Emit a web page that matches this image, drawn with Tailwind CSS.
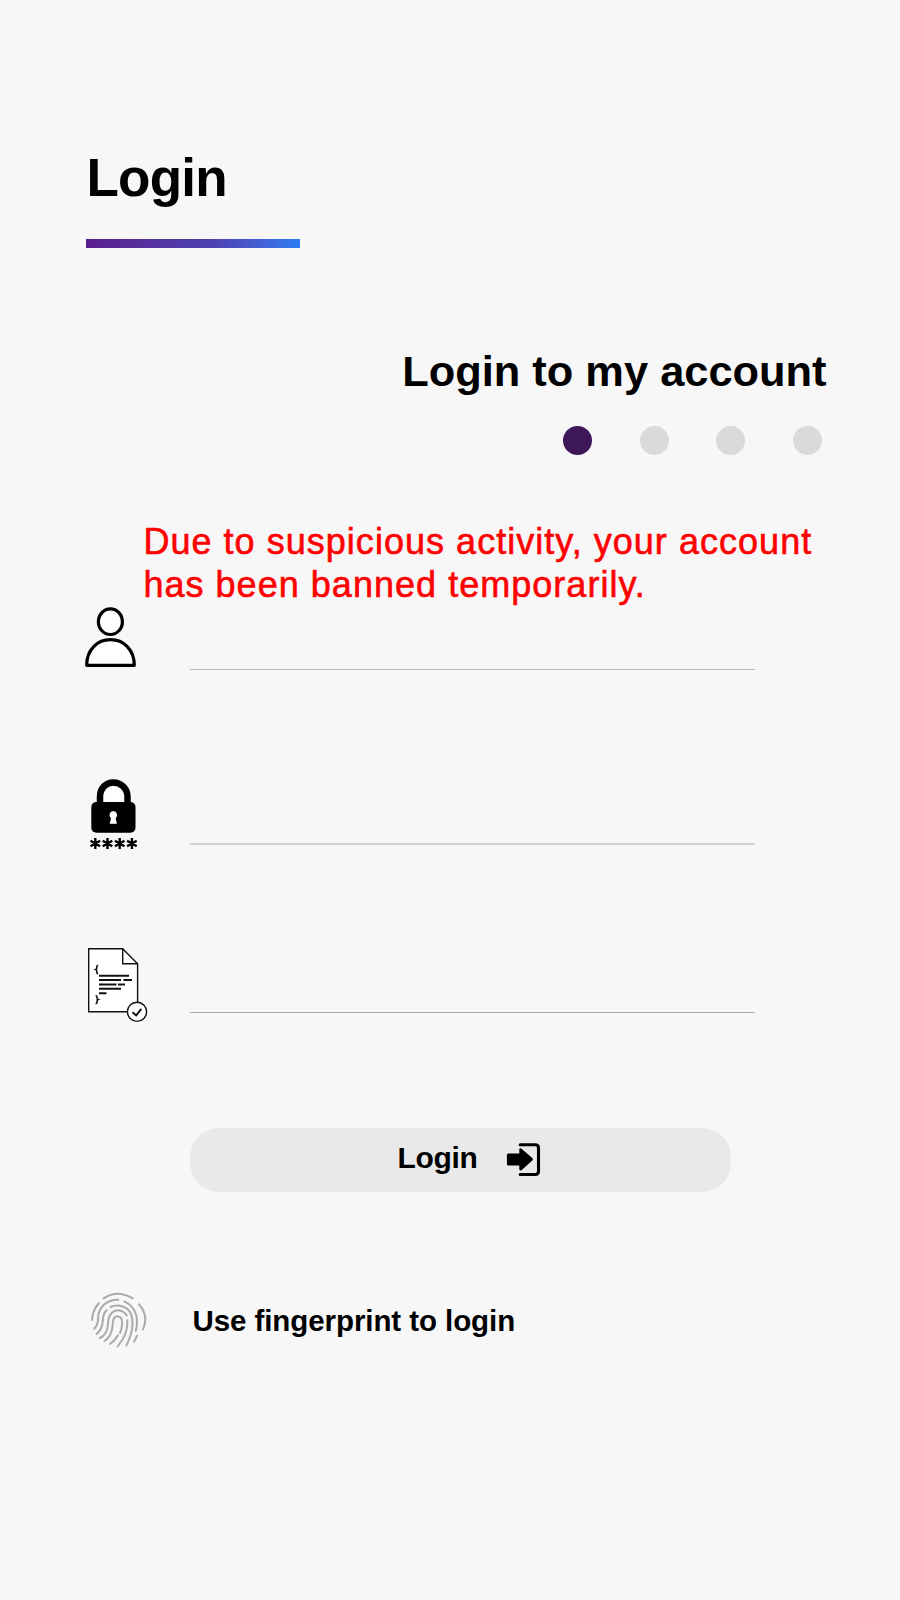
<!DOCTYPE html>
<html lang="en">
<head>
<meta charset="utf-8">
<title>Login</title>
<script src="https://cdn.jsdelivr.net/npm/@tailwindcss/browser@4"></script>
</head>
<body class="bg-[#f7f7f7]">
<main class="flex h-[1600px] w-[900px] flex-col overflow-hidden bg-[#f7f7f7] pt-[148px] font-['Liberation_Sans',Arial,sans-serif] text-black">
  <header class="pl-[85.5px]">
    <h1 class="ml-[1px] text-[53px] leading-[60px] font-bold tracking-[-0.8px]">Login</h1>
    <div class="mt-[31px] h-[9px] w-[214.5px] bg-linear-to-r from-[#5b1e8e] via-[#4c42b2] via-60% to-[#2b7bf3]"></div>
  </header>
  <section class="mt-[98px] flex flex-col items-end">
    <h2 class="mr-[73.5px] text-[43.4px] leading-[50px] font-bold whitespace-nowrap">Login to my account</h2>
    <div class="mt-[30px] mr-[78.5px] flex gap-[47.5px]">
      <span class="size-[29px] rounded-full bg-[#3d1758]"></span>
      <span class="size-[29px] rounded-full bg-[#dadada]"></span>
      <span class="size-[29px] rounded-full bg-[#dadada]"></span>
      <span class="size-[29px] rounded-full bg-[#dadada]"></span>
    </div>
  </section>
  <p class="mt-[65px] ml-[143.4px] h-[86px] text-[36px] leading-[43px] tracking-[1.03px] whitespace-nowrap text-[#ff0000] [-webkit-text-stroke:0.6px_#ff0000]">Due to suspicious activity, your account<br>has been banned temporarily.</p>
  <form class="flex flex-col">
    <label class="flex h-[64px] items-end">
      <svg class="ml-20 h-[70px] w-20 shrink-0" viewBox="80 600 80 70" fill="#fff" stroke="#000" stroke-width="3.2" stroke-linejoin="round"><ellipse cx="110.4" cy="621.7" rx="12" ry="12.8"/><path d="M86.7 665.3C86.7 649.5 97.5 639.7 110.5 639.7S134.3 649.5 134.3 665.3Z"/></svg>
      <span class="ml-[30px] h-px w-[565px] bg-[#b8b8b8]"></span>
    </label>
    <label class="flex h-[175px] items-end">
      <svg class="ml-20 h-[80px] w-20 shrink-0 translate-y-[9px]" viewBox="80 774 80 80" fill="none">
        <path d="M100 806V798C100 789 106 784 113.300 784S127 789 127 798V806Z" fill="#fff"/>
        <path d="M100 806V797C100 788 106 782.500 113.300 782.500S127.500 788 127.500 797V806" stroke="#000" stroke-width="6.500"/>
        <rect x="91.300" y="802" width="44.200" height="30.700" rx="5" fill="#000"/>
        <path d="M113.300 811A3.900 3.900 0 0 1 115.900 817.700L115.800 819.500L117 823.700H109.600L110.800 819.500L110.700 817.700A3.900 3.900 0 0 1 113.300 811Z" fill="#fff"/>
        <path stroke="#000" stroke-width="2.400" d="M95.300 838V849M90.500 840.700L100.100 846.300M90.500 846.300L100.100 840.700M107.500 838V849M102.700 840.700L112.300 846.300M102.700 846.300L112.300 840.700M119.700 838V849M114.900 840.700L124.500 846.300M114.900 846.300L124.500 840.700M131.900 838V849M127.100 840.700L136.700 846.300M127.100 846.300L136.700 840.700"/>
      </svg>
      <span class="ml-[30px] h-[2px] w-[565px] bg-[#d2d2d2]"></span>
    </label>
    <label class="flex h-[168px] items-end">
      <svg class="ml-20 h-[90px] w-20 shrink-0 translate-y-[17px]" viewBox="80 940 80 90" fill="none" stroke="#111" stroke-width="1.400">
        <path d="M88.700 948.700H122.700L137.600 963.700V1011.800H88.700Z" fill="#fff"/><path d="M122.700 948.700V963.700H137.600"/>
        <path stroke-width="1.600" d="M98.200 965.300Q96.700 965.300 96.700 967V968.300Q96.700 969.300 95.700 969.600Q96.700 970 96.700 971V972Q96.700 973.700 98.200 973.700M95.600 995.500Q97.100 995.500 97.100 997.200V998.400Q97.100 999.300 98.100 999.600Q97.100 1000 97.100 1000.900V1002Q97.100 1003.600 95.600 1003.600"/>
        <path stroke-width="1.900" d="M99 975.700H129M99 980H121M123.500 980H132M99 984.500H116.500M118 984.500H125M99 988.700H121M99 993.200H106.500"/>
        <circle cx="137" cy="1011.800" r="9.600" fill="#fff"/><path stroke-width="2" d="M132.500 1012.200L136.200 1015.400L141.300 1008.800"/>
      </svg>
      <span class="ml-[30px] h-px w-[565px] bg-[#aaa]"></span>
    </label>
    <button type="button" class="mt-[115px] ml-[190px] flex h-[64px] w-[540.5px] items-center rounded-[29px] bg-[#e9e9e9] pl-[207.5px] text-left">
      <span class="w-[108px] -translate-y-[2px] text-[30px] leading-9 font-bold tracking-[-0.3px]">Login</span>
      <svg class="h-[36px] w-[36px]" viewBox="505 1142 36 36" fill="none"><path d="M519.200 1144.800H534.300Q537.500 1144.800 537.500 1148V1171.300Q537.500 1174.500 534.300 1174.500H519.200" stroke="#000" stroke-width="3.100" stroke-linecap="round"/><path d="M507.300 1153.500H518.300V1149Q519.200 1147.500 520.500 1148.800L531.300 1158Q532.500 1159.300 531.300 1160.500L520.500 1170.200Q519.200 1171.200 518.300 1169.500V1165.500H507.300Q505.900 1165.500 505.900 1164V1155Q505.900 1153.500 507.300 1153.500Z" fill="#000"/></svg>
    </button>
  </form>
  <div class="mt-[93px] flex h-[70px] items-center">
    <svg class="ml-[79.500px] h-[70px] w-[75px]" viewBox="0 0 225 210" fill="none" stroke="#aaa" stroke-width="6" stroke-linecap="round">
      <path d="M71 40Q112 12 158 40M36 105Q37 77 57 54M43 131Q54 119 54 102C54 64 83 43 115 44M133 49Q161 62 169 91Q174 115 167 138M177 58Q207 91 189 133"/>
      <path d="M50 147Q67 132 68 109Q69 86 80 76M92 66Q119 54 143 73C162 90 164 133 139 182M60 159Q82 149 84 117C84 83 106 70 127 79Q137 84 140 92M142 106Q145 146 113 184M74 168Q96 154 98 119Q98 94 113 94Q129 96 126 120Q125 133 120 144M90 177Q106 166 114 151M171 152Q167 162 162 170"/>
    </svg>
    <span class="ml-[38px] translate-y-[1px] text-[29.5px] leading-9 font-bold tracking-[-0.08px]">Use fingerprint to login</span>
  </div>
</main>
</body>
</html>
